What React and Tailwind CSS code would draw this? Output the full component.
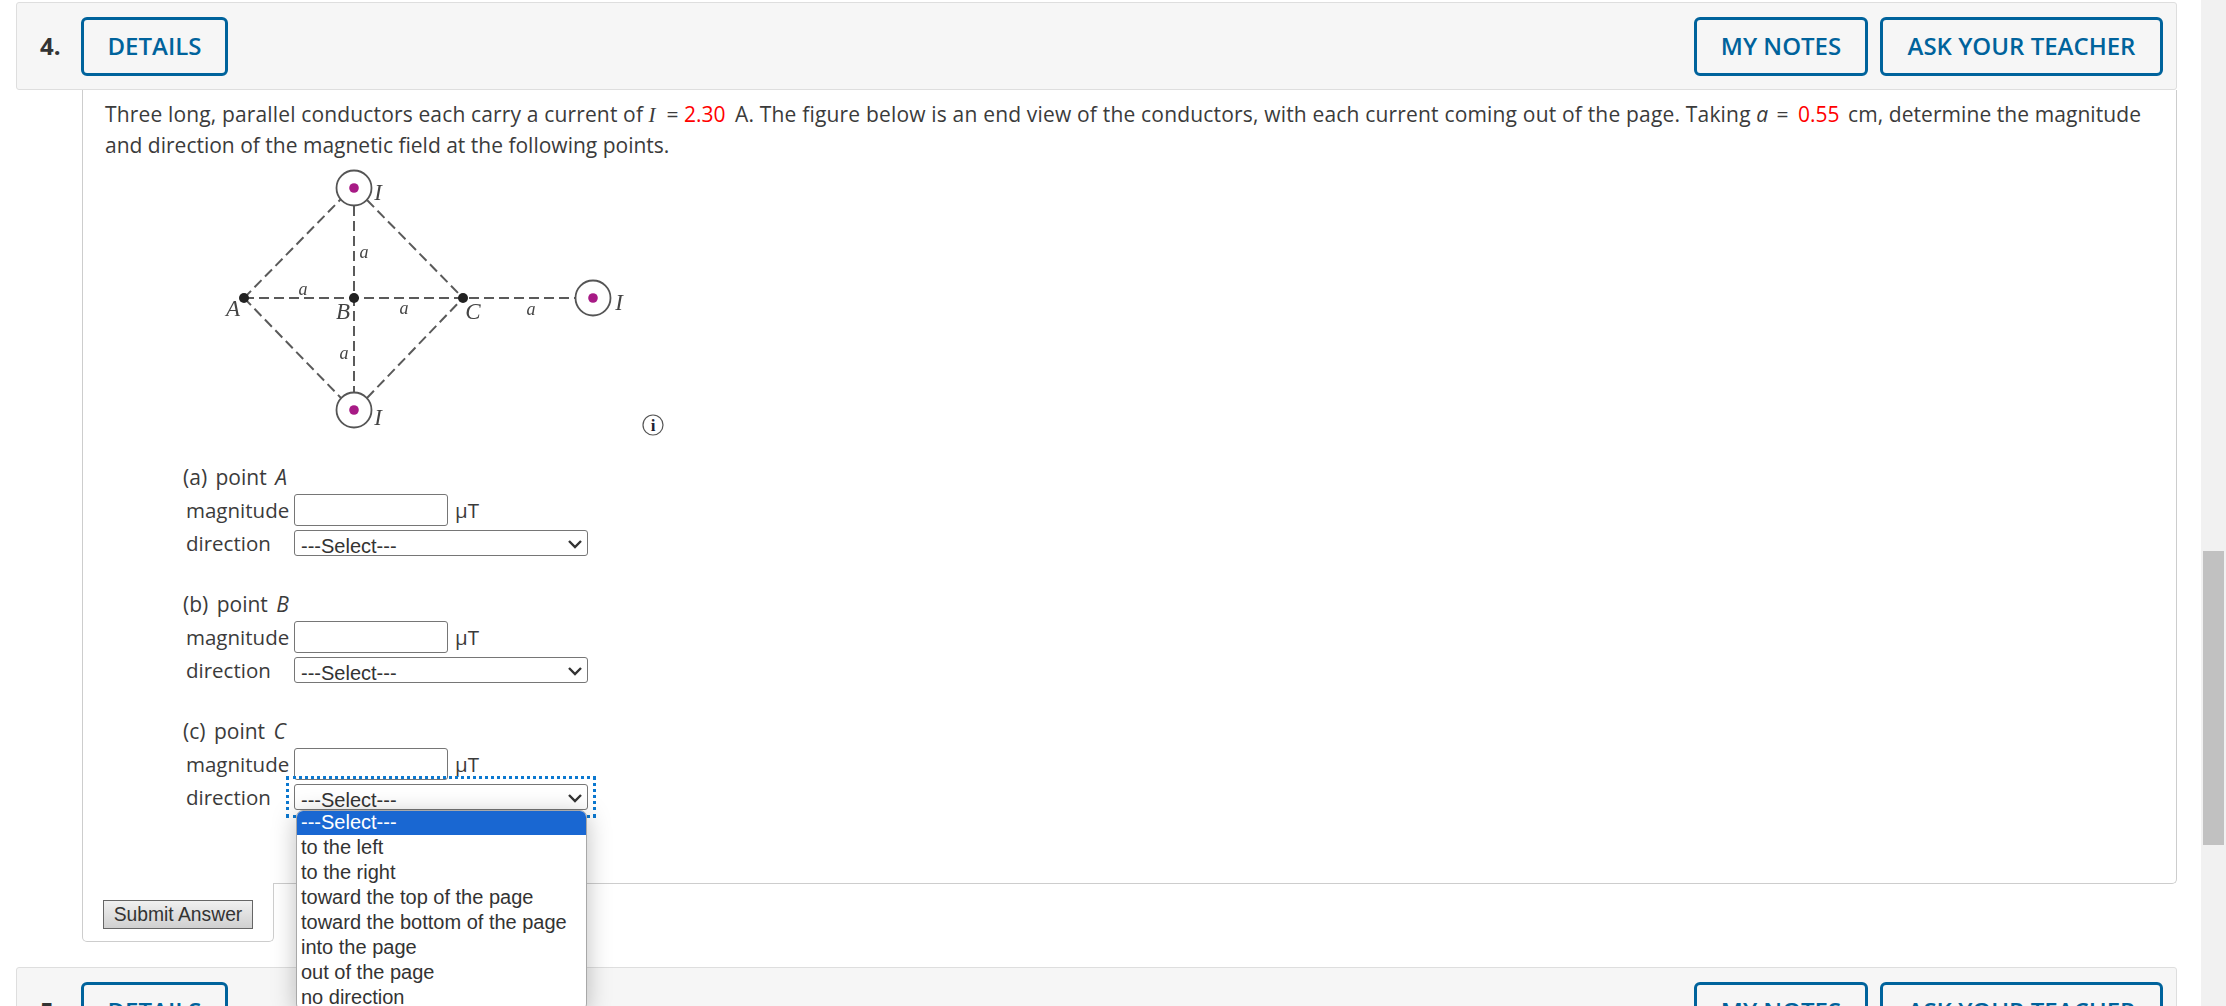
import React from 'react';

const font = { sans: 'font-["Open_Sans",sans-serif]', arial: 'font-["Liberation_Sans",Arial,sans-serif]' };

const options = [
  'to the left',
  'to the right',
  'toward the top of the page',
  'toward the bottom of the page',
  'into the page',
  'out of the page',
  'no direction',
];

const HeaderButton = ({ children, className = '' }) => (
  <button className={`h-[59px] rounded-[6px] border-[3px] border-[#00639c] text-[#00639c] text-[24px] font-semibold ${className}`}>
    {children}
  </button>
);

const QuestionHeader = ({ number }) => (
  <div className="flex h-[88px] shrink-0 items-center rounded-[3px] border border-[#dedede] bg-[#f6f6f6] pl-[23px] pr-[13px]">
    <span className="w-[41px] text-[24px] font-bold text-[#333]">{number}.</span>
    <HeaderButton className="w-[147px]">DETAILS</HeaderButton>
    <div className="ml-auto flex gap-3">
      <HeaderButton className="w-[174px]">MY NOTES</HeaderButton>
      <HeaderButton className="w-[283px]">ASK YOUR TEACHER</HeaderButton>
    </div>
  </div>
);

const Figure = () => {
  const dashed = [
    'M44 138 L141 39', 'M167 40 L263 138', 'M44 138 L141 238', 'M167 238 L263 138',
    'M44 138 L375 138', 'M154 46 L154 232',
  ];
  const currents = [[154, 28], [154, 250], [393, 138]];
  const points = [[44, 138], [154, 138], [263, 138]];
  const capitals = [['A', 33, 156], ['B', 143, 159], ['C', 273, 159], ['I', 178, 40], ['I', 178, 265], ['I', 419, 150]];
  const small = [['a', 103, 135], ['a', 164, 98], ['a', 204, 154], ['a', 331, 155], ['a', 144, 199]];
  return (
    <svg width="480" height="280" viewBox="0 0 480 280" className="-mt-px ml-[95px] block">
      <g className="blur-[0.5px]">
        {dashed.map((d) => (
          <path key={d} d={d} fill="none" stroke="#5a5a5a" strokeWidth="2" strokeDasharray="10 5" />
        ))}
        {currents.map(([x, y]) => (
          <g key={`${x}-${y}`}>
            <circle cx={x} cy={y} r="17.5" fill="#fff" stroke="#555" strokeWidth="1.8" />
            <circle cx={x} cy={y} r="4.8" fill="#a71a85" />
          </g>
        ))}
        {points.map(([x, y]) => (
          <circle key={x} cx={x} cy={y} r="5" fill="#222" />
        ))}
        <g fontFamily="Liberation Serif, serif" fontStyle="italic" fill="#444" textAnchor="middle">
          {capitals.map(([t, x, y]) => (
            <text key={`${t}${x}`} x={x} y={y} fontSize="23">{t}</text>
          ))}
          {small.map(([t, x, y]) => (
            <text key={`${x}${y}`} x={x} y={y} fontSize="18">{t}</text>
          ))}
        </g>
      </g>
      <circle cx="453" cy="265" r="10" fill="#fff" stroke="#555" strokeWidth="1.2" />
      <text x="453" y="271" textAnchor="middle" fontFamily="Liberation Serif, serif" fontWeight="bold" fontSize="17" fill="#223">i</text>
    </svg>
  );
};

const SelectBox = ({ focused }) => (
  <div className={`relative h-[26px] w-[294px] ${focused ? 'outline-[3px] outline-offset-[5px] outline-dotted outline-[#0b78d0]' : ''}`}>
    <select className={`h-full w-full appearance-none rounded-[3px] border border-[#767676] bg-white pb-[2px] pl-[6px] text-[20px] text-[#333] ${font.arial}`}>
      <option>---Select---</option>
      {options.map((o) => (
        <option key={o}>{o}</option>
      ))}
    </select>
    <svg width="16" height="10" viewBox="0 0 16 10" className="pointer-events-none absolute right-[5px] top-[9px]">
      <path d="M2 2 L8 8 L14 2" fill="none" stroke="#333" strokeWidth="2.4" />
    </svg>
  </div>
);

const Part = ({ letter, point, open }) => (
  <div className="mb-[33px] ml-[78px]">
    <div className="flex h-[32px] items-center [word-spacing:3px]">
      ({letter}) point&nbsp;<i>{point}</i>
    </div>
    <div className="flex h-[32px] items-center pl-[3px] text-[20.5px]">
      <span className="w-[108px]">magnitude</span>
      <input className="h-[32px] w-[154px] rounded-[3px] border border-[#767676] bg-white" />
      <span className="ml-[7px]">μT</span>
    </div>
    <div className="relative mt-1 flex h-[26px] items-center pl-[3px] text-[20.5px]">
      <span className="w-[108px]">direction</span>
      <SelectBox focused={open} />
      {open && (
        <ul className={`absolute left-[113px] top-[26px] z-10 w-[291px] overflow-hidden rounded-[7px] border border-[#a8a8a8] bg-white text-[20px] leading-[25px] text-[#333] shadow-[0_4px_24px_rgba(0,0,0,0.25)] ${font.arial}`}>
          <li className="h-[24px] bg-[#1967d2] pl-[4px] leading-[23px] text-white">---Select---</li>
          {options.map((o) => (
            <li key={o} className="pl-[4px]">{o}</li>
          ))}
        </ul>
      )}
    </div>
  </div>
);

export default function App() {
  return (
    <div className={`flex h-screen overflow-hidden bg-white text-[21px] text-[#3b3b3b] ${font.sans}`}>
      <main className="flex min-w-0 flex-1 flex-col pl-4 pr-6 pt-[2px]">
        <QuestionHeader number={4} />
        <div className="ml-[66px] shrink-0">
          <div className="h-[794px] rounded-br-[5px] border-x border-b border-[#cdcdcd] pl-[22px] pr-[30px] pt-[9px]">
            <p className="leading-[31px]">
              <span className="tracking-[0.15px]">Three long, parallel conductors each carry a current of</span>{' '}
              <i className="font-['Liberation_Serif',serif] leading-none">I</i>&nbsp;&nbsp;=&nbsp;<span className="text-[#ff0000]">2.30</span>{' '}
              <span className="ml-[4px] tracking-[0.18px]">A. The figure below is an end view of the conductors, with each current coming out of the page. Taking</span>{' '}
              <i>a</i> <span className="mx-[3px]">=</span> <span className="ml-[1px] text-[#ff0000]">0.55</span>{' '}
              <span className="ml-[3px] tracking-[0.07px]">cm, determine the magnitude</span> and direction of the magnetic field at the following points.
            </p>
            <Figure />
            <div className="mt-[22px]">
              <Part letter="a" point="A" />
              <Part letter="b" point="B" />
              <Part letter="c" point="C" open />
            </div>
          </div>
          <div className="-mt-px flex h-[59px] w-[192px] rounded-b-[5px] border-x border-b border-[#cdcdcd] bg-white pl-[20px] pt-[17px]">
            <button className={`h-[29px] w-[150px] border border-[#666] bg-gradient-to-b from-[#f0f0f0] to-[#d0d0d0] text-[19.3px] text-[#333] ${font.arial}`}>
              Submit Answer
            </button>
          </div>
        </div>
        <div className="mt-[25px]">
          <QuestionHeader number={5} />
        </div>
      </main>
      <aside className="w-[25px] shrink-0 bg-[#f1f1f1] px-[2px] pt-[551px]">
        <div className="h-[294px] bg-[#c1c1c1]" />
      </aside>
    </div>
  );
}
